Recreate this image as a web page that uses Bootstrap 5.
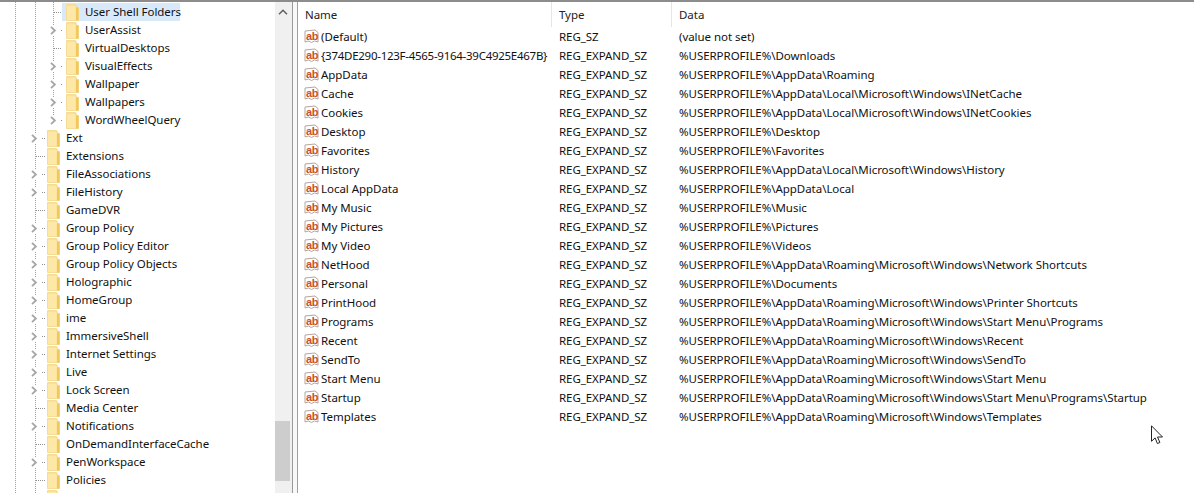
<!DOCTYPE html>
<html lang="en">
<head>
<meta charset="utf-8">
<title>Registry Editor</title>
<link rel="stylesheet" href="https://cdn.jsdelivr.net/npm/bootstrap@5.3.0/dist/css/bootstrap.min.css">
<style>
html,body{height:493px;overflow:hidden;background:#fff}
body{font-family:"Noto Sans","Open Sans",sans-serif;font-size:11.5px;letter-spacing:-.04px;color:#111;line-height:18px;position:relative}
.topline{height:2px;background:#8c8c8c}
.panes{height:491px;overflow:hidden}
.treepane{width:292px;flex:none;overflow:hidden}
.treelist{width:275px;flex:none;padding-top:1px;
 background:repeating-linear-gradient(to bottom,#a0a0a0 0 1px,transparent 1px 2px) 15px 0/1px 100% no-repeat,
 repeating-linear-gradient(to bottom,#a0a0a0 0 1px,transparent 1px 2px) 35px 0/1px 100% no-repeat,
 repeating-linear-gradient(to bottom,#a0a0a0 0 1px,transparent 1px 2px) 53px 0/1px 117px no-repeat}
.trow{height:18px;white-space:nowrap;position:relative}
.lvl3{padding-left:66px}
.lvl2{padding-left:47px}
.trow.branch::before{content:"";position:absolute;top:9px;height:1px;
 background:repeating-linear-gradient(to right,#909090 0 1px,transparent 1px 2px)}
.lvl3.branch::before{left:54px;width:8px}
.lvl2.branch::before{left:36px;width:9px}
.lvl3.hasexp::before{left:61px;width:2px}
.lvl2.hasexp::before{left:42px;width:3px}
.exp{position:absolute;top:5px;width:8px;height:9px;background:#fff}
.lvl3 .exp{left:49px}
.lvl2 .exp{left:30px}
.fold{width:13px;height:17px;flex:none;margin:1px 6px 0 0}
.tsel{background:#d8eafa;margin-left:-4px;padding-left:4px;width:118px;height:18px}
.sbar{width:17px;flex:none;background:#f0f0f0;position:relative}
.sthumb{position:absolute;left:0;width:15px;top:419px;height:60px;background:#cdcdcd}
.sup{position:absolute;left:3px;top:7px;width:10px;height:6px}
.splitbar{width:6px;flex:none;background:#f8f8f8;border-left:1px solid #9a9a9a;border-right:1px solid #a0a0a0}
.listpane{min-width:0;flex:1}
.listhead{height:25px;line-height:25px}
.hcell{border-right:1px solid #e5e5e5;padding-left:7px;color:#222}
.hname{width:254px}
.htype{width:120px}
.regtab{table-layout:fixed;width:880px;margin:0;--bs-table-bg:transparent;--bs-table-color:#111}
.regtab td{padding:0;height:19px;line-height:19px;white-space:nowrap;border:0;font-size:11.5px}
.cname{width:254px;padding-left:6px!important}
.ctype{width:120px;padding-left:7px!important;letter-spacing:-.07px}
.cdata{padding-left:7px!important}
.regtab td.guidname{letter-spacing:-.27px}
.abi{width:15px;height:16px;vertical-align:-3px;margin-right:2px}
.abi path{fill:#fff;stroke:#b8a49e}
.abi text{font:bold 11px "Liberation Sans",sans-serif;fill:#c9502c;letter-spacing:-.3px}
.ptr{position:absolute;left:1151px;top:425px;width:13px;height:20px}
</style>
</head>
<body>
<svg width="0" height="0" class="position-absolute">
<symbol id="f" viewBox="0 0 13 17"><path d="M.5.500h9l1 1.500v1.500h2v13h-12z" fill="#fbe08e" stroke="#f5dc97"/><path d="M10 3.500v13h2.500v-13z" fill="#f0c85e"/><path d="M1 2h8.500v14H1z" fill="#fde8a8"/></symbol>
<symbol id="c" viewBox="0 0 8 9"><path d="M2 .8 5.900 4.500 2 8.200" fill="none" stroke="#a6a6a6" stroke-width="1.800"/></symbol>
</svg>
<div class="topline"></div>
<div class="panes d-flex">
 <div class="treepane d-flex">
  <div class="treelist">
   <div class="trow branch lvl3"><div class="d-flex tsel"><svg class="fold"><use href="#f"/></svg><span>User Shell Folders</span></div></div>
   <div class="trow branch hasexp lvl3 d-flex"><svg class="exp"><use href="#c"/></svg><svg class="fold"><use href="#f"/></svg><span>UserAssist</span></div>
   <div class="trow branch lvl3 d-flex"><svg class="fold"><use href="#f"/></svg><span>VirtualDesktops</span></div>
   <div class="trow branch hasexp lvl3 d-flex"><svg class="exp"><use href="#c"/></svg><svg class="fold"><use href="#f"/></svg><span>VisualEffects</span></div>
   <div class="trow branch hasexp lvl3 d-flex"><svg class="exp"><use href="#c"/></svg><svg class="fold"><use href="#f"/></svg><span>Wallpaper</span></div>
   <div class="trow branch hasexp lvl3 d-flex"><svg class="exp"><use href="#c"/></svg><svg class="fold"><use href="#f"/></svg><span>Wallpapers</span></div>
   <div class="trow branch hasexp lvl3 d-flex"><svg class="exp"><use href="#c"/></svg><svg class="fold"><use href="#f"/></svg><span>WordWheelQuery</span></div>
   <div class="trow branch hasexp lvl2 d-flex"><svg class="exp"><use href="#c"/></svg><svg class="fold"><use href="#f"/></svg><span>Ext</span></div>
   <div class="trow branch lvl2 d-flex"><svg class="fold"><use href="#f"/></svg><span>Extensions</span></div>
   <div class="trow branch hasexp lvl2 d-flex"><svg class="exp"><use href="#c"/></svg><svg class="fold"><use href="#f"/></svg><span>FileAssociations</span></div>
   <div class="trow branch hasexp lvl2 d-flex"><svg class="exp"><use href="#c"/></svg><svg class="fold"><use href="#f"/></svg><span>FileHistory</span></div>
   <div class="trow branch lvl2 d-flex"><svg class="fold"><use href="#f"/></svg><span>GameDVR</span></div>
   <div class="trow branch hasexp lvl2 d-flex"><svg class="exp"><use href="#c"/></svg><svg class="fold"><use href="#f"/></svg><span>Group Policy</span></div>
   <div class="trow branch hasexp lvl2 d-flex"><svg class="exp"><use href="#c"/></svg><svg class="fold"><use href="#f"/></svg><span>Group Policy Editor</span></div>
   <div class="trow branch hasexp lvl2 d-flex"><svg class="exp"><use href="#c"/></svg><svg class="fold"><use href="#f"/></svg><span>Group Policy Objects</span></div>
   <div class="trow branch hasexp lvl2 d-flex"><svg class="exp"><use href="#c"/></svg><svg class="fold"><use href="#f"/></svg><span>Holographic</span></div>
   <div class="trow branch hasexp lvl2 d-flex"><svg class="exp"><use href="#c"/></svg><svg class="fold"><use href="#f"/></svg><span>HomeGroup</span></div>
   <div class="trow branch hasexp lvl2 d-flex"><svg class="exp"><use href="#c"/></svg><svg class="fold"><use href="#f"/></svg><span>ime</span></div>
   <div class="trow branch hasexp lvl2 d-flex"><svg class="exp"><use href="#c"/></svg><svg class="fold"><use href="#f"/></svg><span>ImmersiveShell</span></div>
   <div class="trow branch hasexp lvl2 d-flex"><svg class="exp"><use href="#c"/></svg><svg class="fold"><use href="#f"/></svg><span>Internet Settings</span></div>
   <div class="trow branch hasexp lvl2 d-flex"><svg class="exp"><use href="#c"/></svg><svg class="fold"><use href="#f"/></svg><span>Live</span></div>
   <div class="trow branch hasexp lvl2 d-flex"><svg class="exp"><use href="#c"/></svg><svg class="fold"><use href="#f"/></svg><span>Lock Screen</span></div>
   <div class="trow branch lvl2 d-flex"><svg class="fold"><use href="#f"/></svg><span>Media Center</span></div>
   <div class="trow branch hasexp lvl2 d-flex"><svg class="exp"><use href="#c"/></svg><svg class="fold"><use href="#f"/></svg><span>Notifications</span></div>
   <div class="trow branch lvl2 d-flex"><svg class="fold"><use href="#f"/></svg><span>OnDemandInterfaceCache</span></div>
   <div class="trow branch hasexp lvl2 d-flex"><svg class="exp"><use href="#c"/></svg><svg class="fold"><use href="#f"/></svg><span>PenWorkspace</span></div>
   <div class="trow branch lvl2 d-flex"><svg class="fold"><use href="#f"/></svg><span>Policies</span></div>
   <div class="trow branch lvl2 d-flex"><svg class="fold"><use href="#f"/></svg></div>
  </div>
  <div class="sbar">
   <svg class="sup" viewBox="0 0 10 6"><path d="M1 5.200 5 1.300 9 5.200" fill="none" stroke="#606060" stroke-width="1.500"/></svg>
   <div class="sthumb"></div>
  </div>
 </div>
 <div class="splitbar"></div>
 <div class="listpane">
  <div class="listhead d-flex">
   <div class="hcell hname">Name</div>
   <div class="hcell htype">Type</div>
   <div class="hcell border-0">Data</div>
  </div>
  <table class="table table-borderless regtab">
   <colgroup><col class="cname"><col class="ctype"><col></colgroup>
   <tbody>
    <tr><td class="cname"><svg class="abi" viewBox="0 0 15 16"><path d="M1 3 11 2l3 2.500V14l-3.500-1-3 1.500-3-1.500L1 14z"/><text x="2" y="11.500">ab</text></svg>(Default)</td><td class="ctype">REG_SZ</td><td class="cdata">(value not set)</td></tr>
    <tr><td class="cname guidname"><svg class="abi" viewBox="0 0 15 16"><path d="M1 3 11 2l3 2.500V14l-3.500-1-3 1.500-3-1.500L1 14z"/><text x="2" y="11.500">ab</text></svg>{374DE290-123F-4565-9164-39C4925E467B}</td><td class="ctype">REG_EXPAND_SZ</td><td class="cdata">%USERPROFILE%\Downloads</td></tr>
    <tr><td class="cname"><svg class="abi" viewBox="0 0 15 16"><path d="M1 3 11 2l3 2.500V14l-3.500-1-3 1.500-3-1.500L1 14z"/><text x="2" y="11.500">ab</text></svg>AppData</td><td class="ctype">REG_EXPAND_SZ</td><td class="cdata">%USERPROFILE%\AppData\Roaming</td></tr>
    <tr><td class="cname"><svg class="abi" viewBox="0 0 15 16"><path d="M1 3 11 2l3 2.500V14l-3.500-1-3 1.500-3-1.500L1 14z"/><text x="2" y="11.500">ab</text></svg>Cache</td><td class="ctype">REG_EXPAND_SZ</td><td class="cdata">%USERPROFILE%\AppData\Local\Microsoft\Windows\INetCache</td></tr>
    <tr><td class="cname"><svg class="abi" viewBox="0 0 15 16"><path d="M1 3 11 2l3 2.500V14l-3.500-1-3 1.500-3-1.500L1 14z"/><text x="2" y="11.500">ab</text></svg>Cookies</td><td class="ctype">REG_EXPAND_SZ</td><td class="cdata">%USERPROFILE%\AppData\Local\Microsoft\Windows\INetCookies</td></tr>
    <tr><td class="cname"><svg class="abi" viewBox="0 0 15 16"><path d="M1 3 11 2l3 2.500V14l-3.500-1-3 1.500-3-1.500L1 14z"/><text x="2" y="11.500">ab</text></svg>Desktop</td><td class="ctype">REG_EXPAND_SZ</td><td class="cdata">%USERPROFILE%\Desktop</td></tr>
    <tr><td class="cname"><svg class="abi" viewBox="0 0 15 16"><path d="M1 3 11 2l3 2.500V14l-3.500-1-3 1.500-3-1.500L1 14z"/><text x="2" y="11.500">ab</text></svg>Favorites</td><td class="ctype">REG_EXPAND_SZ</td><td class="cdata">%USERPROFILE%\Favorites</td></tr>
    <tr><td class="cname"><svg class="abi" viewBox="0 0 15 16"><path d="M1 3 11 2l3 2.500V14l-3.500-1-3 1.500-3-1.500L1 14z"/><text x="2" y="11.500">ab</text></svg>History</td><td class="ctype">REG_EXPAND_SZ</td><td class="cdata">%USERPROFILE%\AppData\Local\Microsoft\Windows\History</td></tr>
    <tr><td class="cname"><svg class="abi" viewBox="0 0 15 16"><path d="M1 3 11 2l3 2.500V14l-3.500-1-3 1.500-3-1.500L1 14z"/><text x="2" y="11.500">ab</text></svg>Local AppData</td><td class="ctype">REG_EXPAND_SZ</td><td class="cdata">%USERPROFILE%\AppData\Local</td></tr>
    <tr><td class="cname"><svg class="abi" viewBox="0 0 15 16"><path d="M1 3 11 2l3 2.500V14l-3.500-1-3 1.500-3-1.500L1 14z"/><text x="2" y="11.500">ab</text></svg>My Music</td><td class="ctype">REG_EXPAND_SZ</td><td class="cdata">%USERPROFILE%\Music</td></tr>
    <tr><td class="cname"><svg class="abi" viewBox="0 0 15 16"><path d="M1 3 11 2l3 2.500V14l-3.500-1-3 1.500-3-1.500L1 14z"/><text x="2" y="11.500">ab</text></svg>My Pictures</td><td class="ctype">REG_EXPAND_SZ</td><td class="cdata">%USERPROFILE%\Pictures</td></tr>
    <tr><td class="cname"><svg class="abi" viewBox="0 0 15 16"><path d="M1 3 11 2l3 2.500V14l-3.500-1-3 1.500-3-1.500L1 14z"/><text x="2" y="11.500">ab</text></svg>My Video</td><td class="ctype">REG_EXPAND_SZ</td><td class="cdata">%USERPROFILE%\Videos</td></tr>
    <tr><td class="cname"><svg class="abi" viewBox="0 0 15 16"><path d="M1 3 11 2l3 2.500V14l-3.500-1-3 1.500-3-1.500L1 14z"/><text x="2" y="11.500">ab</text></svg>NetHood</td><td class="ctype">REG_EXPAND_SZ</td><td class="cdata">%USERPROFILE%\AppData\Roaming\Microsoft\Windows\Network Shortcuts</td></tr>
    <tr><td class="cname"><svg class="abi" viewBox="0 0 15 16"><path d="M1 3 11 2l3 2.500V14l-3.500-1-3 1.500-3-1.500L1 14z"/><text x="2" y="11.500">ab</text></svg>Personal</td><td class="ctype">REG_EXPAND_SZ</td><td class="cdata">%USERPROFILE%\Documents</td></tr>
    <tr><td class="cname"><svg class="abi" viewBox="0 0 15 16"><path d="M1 3 11 2l3 2.500V14l-3.500-1-3 1.500-3-1.500L1 14z"/><text x="2" y="11.500">ab</text></svg>PrintHood</td><td class="ctype">REG_EXPAND_SZ</td><td class="cdata">%USERPROFILE%\AppData\Roaming\Microsoft\Windows\Printer Shortcuts</td></tr>
    <tr><td class="cname"><svg class="abi" viewBox="0 0 15 16"><path d="M1 3 11 2l3 2.500V14l-3.500-1-3 1.500-3-1.500L1 14z"/><text x="2" y="11.500">ab</text></svg>Programs</td><td class="ctype">REG_EXPAND_SZ</td><td class="cdata">%USERPROFILE%\AppData\Roaming\Microsoft\Windows\Start Menu\Programs</td></tr>
    <tr><td class="cname"><svg class="abi" viewBox="0 0 15 16"><path d="M1 3 11 2l3 2.500V14l-3.500-1-3 1.500-3-1.500L1 14z"/><text x="2" y="11.500">ab</text></svg>Recent</td><td class="ctype">REG_EXPAND_SZ</td><td class="cdata">%USERPROFILE%\AppData\Roaming\Microsoft\Windows\Recent</td></tr>
    <tr><td class="cname"><svg class="abi" viewBox="0 0 15 16"><path d="M1 3 11 2l3 2.500V14l-3.500-1-3 1.500-3-1.500L1 14z"/><text x="2" y="11.500">ab</text></svg>SendTo</td><td class="ctype">REG_EXPAND_SZ</td><td class="cdata">%USERPROFILE%\AppData\Roaming\Microsoft\Windows\SendTo</td></tr>
    <tr><td class="cname"><svg class="abi" viewBox="0 0 15 16"><path d="M1 3 11 2l3 2.500V14l-3.500-1-3 1.500-3-1.500L1 14z"/><text x="2" y="11.500">ab</text></svg>Start Menu</td><td class="ctype">REG_EXPAND_SZ</td><td class="cdata">%USERPROFILE%\AppData\Roaming\Microsoft\Windows\Start Menu</td></tr>
    <tr><td class="cname"><svg class="abi" viewBox="0 0 15 16"><path d="M1 3 11 2l3 2.500V14l-3.500-1-3 1.500-3-1.500L1 14z"/><text x="2" y="11.500">ab</text></svg>Startup</td><td class="ctype">REG_EXPAND_SZ</td><td class="cdata">%USERPROFILE%\AppData\Roaming\Microsoft\Windows\Start Menu\Programs\Startup</td></tr>
    <tr><td class="cname"><svg class="abi" viewBox="0 0 15 16"><path d="M1 3 11 2l3 2.500V14l-3.500-1-3 1.500-3-1.500L1 14z"/><text x="2" y="11.500">ab</text></svg>Templates</td><td class="ctype">REG_EXPAND_SZ</td><td class="cdata">%USERPROFILE%\AppData\Roaming\Microsoft\Windows\Templates</td></tr>
   </tbody>
  </table>
 </div>
</div>
<svg class="ptr" viewBox="0 0 13 20"><path d="M.500.800v15.500l3.600-3.400 2.300 5.600 2.500-1-2.400-5.500h5z" fill="#fff" stroke="#222"/></svg>
</body>
</html>
